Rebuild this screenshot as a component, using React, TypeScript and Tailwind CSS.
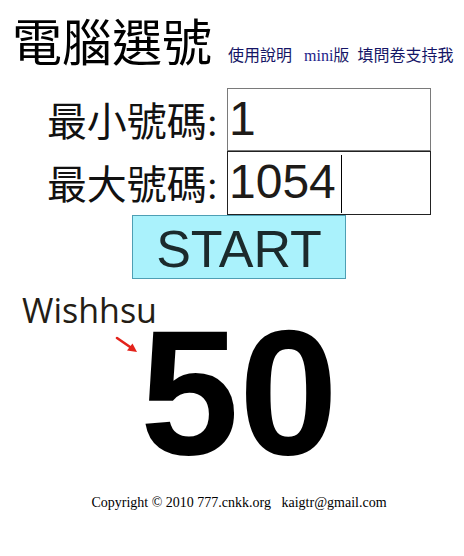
import React from "react";

const serif = "font-['Liberation_Serif','Noto_Sans_CJK_TC',serif]";
const sans = "font-['Liberation_Sans',Arial,sans-serif]";

function NumberBox({ value, caret, border }: { value: string; caret?: boolean; border: string }) {
  return (
    <div
      className={`flex h-full w-[204px] items-start border bg-white pl-px pt-[6px] text-[48px] leading-none text-[#1e1b18] ${sans} ${border}`}
    >
      <span>{value}</span>
      {caret && <span className="ml-[5px] -mt-[3px] h-[58px] w-px bg-black" />}
    </div>
  );
}

function FieldRow({ label, value, caret, border, height }: { label: string; value: string; caret?: boolean; border: string; height: string }) {
  return (
    <div className={`flex ${height}`}>
      <div className={`flex w-[227px] items-center justify-end pr-[9px] pt-[6px] text-[40px] leading-none text-[#111] ${serif}`}>
        {label}
      </div>
      <NumberBox value={value} caret={caret} border={border} />
    </div>
  );
}

export default function App() {
  return (
    <div className="min-h-screen bg-white">
      <header className={`flex items-baseline pl-[12px] pt-[19px] ${serif}`}>
        <h1 className="text-[50px] font-normal leading-none text-black">電腦選號</h1>
        <nav className="ml-[16px] flex items-baseline text-[16px] leading-none text-[#151566]">
          <a href="#">使用說明</a>
          <a href="#" className="ml-[12px]">
            <span className="text-[#22228a]">mini</span>版
          </a>
          <a href="#" className="ml-[8px]">填問卷支持我</a>
        </nav>
      </header>

      <div className="mt-[19px] flex flex-col">
        <FieldRow label="最小號碼:" value="1" border="border-[#7a7a7a]" height="h-[63px]" />
        <FieldRow label="最大號碼:" value="1054" caret border="border-[#222]" height="h-[64px]" />
      </div>

      <div className="pl-[132px]">
        <button
          className={`flex h-[64px] w-[214px] items-center justify-center border border-[#4e9fb4] bg-[#aaf2fc] pt-[4px] text-[52px] leading-none text-[#1b2a2c] ${sans}`}
        >
          START
        </button>
      </div>

      <section className="relative mt-[14px]">
        <div className="pl-[22px] font-['Open_Sans',sans-serif] text-[34px] font-medium leading-none text-[#241d15]">Wishhsu</div>
        <svg className="absolute left-[114px] top-[42px]" width="26" height="20" viewBox="0 0 26 20">
          <line x1="3" y1="3" x2="19" y2="14" stroke="#e3231b" strokeWidth="2.6" strokeLinecap="round" />
          <polygon points="23,17 13,15.5 18.5,8.5" fill="#e3231b" />
        </svg>
        <div className={`-mt-[23px] pl-[14px] text-center text-[178px] font-bold leading-none text-black ${sans}`}>50</div>
      </section>

      <footer className={`mt-[14px] whitespace-pre pl-[14px] text-center text-[14px] leading-none text-black ${serif}`}>
        {"Copyright © 2010 777.cnkk.org   kaigtr@gmail.com"}
      </footer>
    </div>
  );
}
